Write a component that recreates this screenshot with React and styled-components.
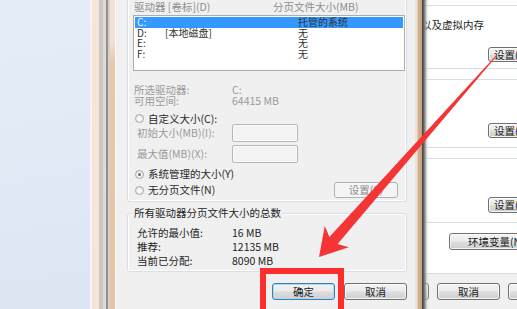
import React from "react";
import styled, { createGlobalStyle } from "styled-components";

const GlobalStyle = createGlobalStyle`
  *, *::before, *::after { box-sizing: border-box; }
  html, body { margin: 0; padding: 0; }
  body { background: #dfe8f4; overflow: hidden; }
`;

const Screen = styled.div`
  position: relative;
  display: flex;
  width: 517px;
  height: 309px;
  overflow: hidden;
  font-family: "Noto Sans CJK SC", "Noto Sans", sans-serif;
  font-size: 10.5px;
  line-height: 12px;
  color: #1e1e1e;
`;

const Desktop = styled.div`
  flex: none;
  width: 90px;
  background: linear-gradient(170deg, #e5edf8 0%, #dce6f2 100%);
`;

const FrameLeft = styled.div`
  flex: none;
  display: flex;
`;

const Strip = styled.div`
  width: ${(p) => p.$w}px;
  background: ${(p) => p.$bg};
`;

const Dialog = styled.div`
  flex: none;
  width: 299px;
  background: #f0f0f0;
  padding: 0 8px 0 11px;
  display: flex;
  flex-direction: column;
`;

const PageGroup = styled.div`
  height: 202px;
  border: 1px solid #d5dfe5;
  border-top: none;
  border-radius: 0 0 3px 3px;
  padding: 0 1px 0 5px;
  display: flex;
  flex-direction: column;
  box-shadow: inset 1px 0 0 #fff, inset -1px 0 0 #fff, inset 0 -1px 0 #fff;
`;

const ListHeader = styled.div`
  display: flex;
  height: 14px;
  align-items: center;
  padding-left: 1px;
  color: #8e8e8e;
  white-space: nowrap;
`;

const HeaderCell = styled.span`
  flex: none;
  width: ${(p) => (p.$w ? `${p.$w}px` : "auto")};
`;

const ListBox = styled.div`
  margin-top: 1px;
  height: 56px;
  border: 1px solid #abadb3;
  background: #fff;
  padding: 1px;
  font-size: 10px;
`;

const ListRow = styled.div`
  display: flex;
  align-items: center;
  height: 10.5px;
  line-height: 10.5px;
  white-space: nowrap;
  background: ${(p) => (p.$selected ? "#3399ff" : "transparent")};
  color: ${(p) => (p.$selected ? "#e8f3ff" : "#333")};
`;

const Cell = styled.span`
  flex: none;
  width: ${(p) => (p.$w ? `${p.$w}px` : "auto")};
  padding-left: ${(p) => p.$pl || 0}px;
  color: ${(p) => p.$color || "inherit"};
`;

const InfoRow = styled.div`
  display: grid;
  grid-template-columns: ${(p) => p.$label}px auto;
  align-items: center;
  height: ${(p) => p.$h}px;
  margin-top: ${(p) => p.$mt || 0}px;
  padding-left: ${(p) => p.$pl}px;
  color: ${(p) => (p.$disabled ? "#9a9a9a" : "#1e1e1e")};
  white-space: nowrap;
`;

const TextBox = styled.div`
  width: 66px;
  height: 18px;
  border: 1px solid #b4b8bc;
  border-radius: 2px;
  background: #f3f3f3;
  box-shadow: inset 0 0 0 1px #fafafa;
`;

const RadioRow = styled.div`
  display: flex;
  align-items: center;
  height: ${(p) => p.$h}px;
  margin-top: ${(p) => p.$mt || 0}px;
  padding-left: 2px;
  white-space: nowrap;
  color: #2a2a2a;
`;

const RadioLabel = styled.label`
  display: flex;
  align-items: center;
  gap: 4px;
`;

const Radio = styled.span`
  flex: none;
  width: 9px;
  height: 9px;
  border-radius: 50%;
  border: 1px solid #a2a2a2;
  background: radial-gradient(circle at 50% 60%, #ffffff 0%, #e2e2e2 100%);
  display: flex;
  align-items: center;
  justify-content: center;
  &::after {
    content: "";
    width: 3px;
    height: 3px;
    border-radius: 50%;
    background: ${(p) => (p.$checked ? "#6a6a6a" : "transparent")};
  }
`;

const Button = styled.button`
  flex: none;
  width: ${(p) => p.$w}px;
  height: ${(p) => p.$h || 17}px;
  margin: 0;
  padding: 0 ${(p) => p.$pr || 0}px 0 ${(p) => p.$pl || 0}px;
  display: flex;
  align-items: center;
  justify-content: ${(p) => (p.$left ? "flex-start" : "center")};
  border: 1px solid ${(p) => (p.$default ? "#3c7fb1" : p.$disabled ? "#adb2b5" : "#707070")};
  border-radius: 3px;
  background: ${(p) =>
    p.$disabled
      ? "#f4f4f4"
      : "linear-gradient(#f3f3f3 0%, #ebebeb 48%, #dddddd 52%, #cfcfcf 100%)"};
  box-shadow: inset 0 0 0 1px
    ${(p) => (p.$default ? "#a9dcf4" : p.$disabled ? "#f7f7f7" : "rgba(255,255,255,0.75)")};
  font-family: inherit;
  font-size: 10.5px;
  line-height: 12px;
  color: ${(p) => (p.$disabled ? "#8c8c8c" : "#1a1a1a")};
  white-space: nowrap;
  overflow: hidden;
`;

const TotalGroup = styled.div`
  position: relative;
  margin-top: 11px;
  height: 59px;
  border: 1px solid #d5dfe5;
  border-radius: 3px;
  padding: 12px 0 0 9px;
  box-shadow: inset 0 0 0 1px #fff;
`;

const GroupTitle = styled.span`
  position: absolute;
  top: -7px;
  left: 5px;
  padding: 0 1px;
  background: #f0f0f0;
  line-height: 12px;
  white-space: nowrap;
  color: #1e1e1e;
`;

const ButtonRow = styled.div`
  margin-top: 11px;
  display: flex;
  justify-content: flex-end;
  gap: 9px;
`;

const RightWindow = styled.div`
  position: relative;
  flex: 1;
  min-width: 0;
  overflow: hidden;
  background: #f0f0f0;
  display: flex;
  flex-direction: column;
  &::before {
    content: "";
    position: absolute;
    left: 0;
    top: 0;
    bottom: 0;
    width: 14px;
    z-index: 2;
    background: linear-gradient(
      to right,
      #ece3da 0px,
      #ece3da 2px,
      #d3b597 3px,
      #c5a17f 7px,
      #3a3a3a 7px,
      #6e6e6e 9px,
      rgba(200, 200, 200, 0.4) 12px,
      rgba(255, 255, 255, 0) 14px
    );
  }
`;

const TabPage = styled.div`
  flex: none;
  height: 274px;
  background: #fff;
  border-bottom: 1px solid #dadada;
  display: flex;
  flex-direction: column;
`;

const RGroup = styled.div`
  flex: none;
  margin-top: ${(p) => p.$mt}px;
  height: ${(p) => p.$h}px;
  border-top: 1px solid #d5dfe5;
  border-bottom: 1px solid #d5dfe5;
  padding-top: ${(p) => p.$pt}px;
  display: flex;
  flex-direction: column;
`;

const RDesc = styled.div`
  display: flex;
  justify-content: flex-end;
  padding-right: 33px;
  height: 12px;
  white-space: nowrap;
  color: #1e1e1e;
`;

const RBtnRow = styled.div`
  flex: none;
  display: flex;
  gap: 8px;
  margin-top: ${(p) => p.$mt || 0}px;
  margin-left: ${(p) => p.$ml || 0}px;
`;

const Highlight = styled.div`
  position: absolute;
  left: 260px;
  top: 268px;
  width: 84px;
  height: 60px;
  border: 6px solid #ff2e2e;
  z-index: 4;
  pointer-events: none;
`;

const Overlay = styled.svg`
  position: absolute;
  left: 0;
  top: 0;
  width: 517px;
  height: 309px;
  z-index: 5;
  pointer-events: none;
`;

const strips = [
  [2, "#f9f4ef"],
  [7, "#f4e5d8"],
  [4, "#cbc7c4"],
  [3, "#dedad7"],
  [2, "#909090"],
  [2, "#d3d0ce"],
  [5, "linear-gradient(#f2e1d3 0, #f2e1d3 42px, #e8c7ab 62px, #e6c3a5 100%)"],
  [1, "#fbfbfb"],
];

const drives = [
  { d: "C:", label: "", size: "托管的系统", selected: true },
  { d: "D:", label: "[本地磁盘]", size: "无" },
  { d: "E:", label: "", size: "无" },
  { d: "F:", label: "", size: "无" },
];

export default function App() {
  return (
    <>
      <GlobalStyle />
      <Screen>
        <Desktop />
        <FrameLeft>
          {strips.map(([w, bg], i) => (
            <Strip key={i} $w={w} $bg={bg} />
          ))}
        </FrameLeft>

        <Dialog>
          <PageGroup>
            <ListHeader>
              <HeaderCell $w={139}>驱动器 [卷标](D)</HeaderCell>
              <HeaderCell>分页文件大小(MB)</HeaderCell>
            </ListHeader>
            <ListBox>
              {drives.map((r) => (
                <ListRow key={r.d} $selected={r.selected}>
                  <Cell $w={30} $pl={2}>{r.d}</Cell>
                  <Cell $w={133}>{r.label}</Cell>
                  <Cell $color="#333">{r.size}</Cell>
                </ListRow>
              ))}
            </ListBox>
            <InfoRow $label={98} $h={11} $mt={13} $pl={1} $disabled>
              <span>所选驱动器:</span>
              <span>C:</span>
            </InfoRow>
            <InfoRow $label={98} $h={11} $pl={1} $disabled>
              <span>可用空间:</span>
              <span>64415 MB</span>
            </InfoRow>
            <RadioRow $h={11} $mt={7}>
              <RadioLabel>
                <Radio />
                自定义大小(C):
              </RadioLabel>
            </RadioRow>
            <InfoRow $label={95} $h={18} $pl={4} $disabled>
              <span>初始大小(MB)(I):</span>
              <TextBox />
            </InfoRow>
            <InfoRow $label={95} $h={18} $mt={3} $pl={4} $disabled>
              <span>最大值(MB)(X):</span>
              <TextBox />
            </InfoRow>
            <RadioRow $h={12} $mt={5}>
              <RadioLabel>
                <Radio $checked />
                系统管理的大小(Y)
              </RadioLabel>
            </RadioRow>
            <RadioRow $h={16} $mt={2}>
              <RadioLabel>
                <Radio />
                无分页文件(N)
              </RadioLabel>
              <Button
                $w={64}
                $h={16}
                $disabled
                style={{ marginLeft: "auto", marginRight: "7px" }}
              >
                设置(S)
              </Button>
            </RadioRow>
          </PageGroup>

          <TotalGroup>
            <GroupTitle>所有驱动器分页文件大小的总数</GroupTitle>
            <InfoRow $label={95} $h={14} $pl={0}>
              <span>允许的最小值:</span>
              <span>16 MB</span>
            </InfoRow>
            <InfoRow $label={95} $h={14} $pl={0}>
              <span>推荐:</span>
              <span>12135 MB</span>
            </InfoRow>
            <InfoRow $label={95} $h={14} $pl={0}>
              <span>当前已分配:</span>
              <span>8090 MB</span>
            </InfoRow>
          </TotalGroup>

          <ButtonRow>
            <Button $w={63} $default>确定</Button>
            <Button $w={63}>取消</Button>
          </ButtonRow>
        </Dialog>

        <RightWindow>
          <TabPage>
            <RGroup $mt={5} $h={64} $pt={13}>
              <RDesc>
                <span>视觉效果，处理器计划，内存使用，以及虚拟内存</span>
              </RDesc>
              <RBtnRow $mt={16} $ml={73}>
                <Button $w={75} $h={15} $left $pl={5}>设置(S)...</Button>
              </RBtnRow>
            </RGroup>
            <RGroup $mt={10} $h={69} $pt={43}>
              <RBtnRow $ml={73}>
                <Button $w={75} $h={15} $left $pl={5}>设置(E)...</Button>
              </RBtnRow>
            </RGroup>
            <RGroup $mt={10} $h={65} $pt={38}>
              <RBtnRow $ml={73}>
                <Button $w={75} $h={16} $left $pl={5}>设置(T)...</Button>
              </RBtnRow>
            </RGroup>
            <RBtnRow $mt={10} $ml={34}>
              <Button $w={100} $h={17} $left $pl={18}>环境变量(N)...</Button>
            </RBtnRow>
          </TabPage>
          <RBtnRow $mt={9} $ml={-49}>
            <Button $w={63}>确定</Button>
            <Button $w={63}>取消</Button>
            <Button $w={63}>应用(A)</Button>
          </RBtnRow>
        </RightWindow>

        <Highlight />
        <Overlay viewBox="0 0 517 309">
          <polygon
            points="497.4,55.3 337.6,244.1 348.8,247.3 319,257 324.8,226.1 329.4,236.9 496.6,54.7"
            fill="#f53535"
          />
        </Overlay>
      </Screen>
    </>
  );
}
